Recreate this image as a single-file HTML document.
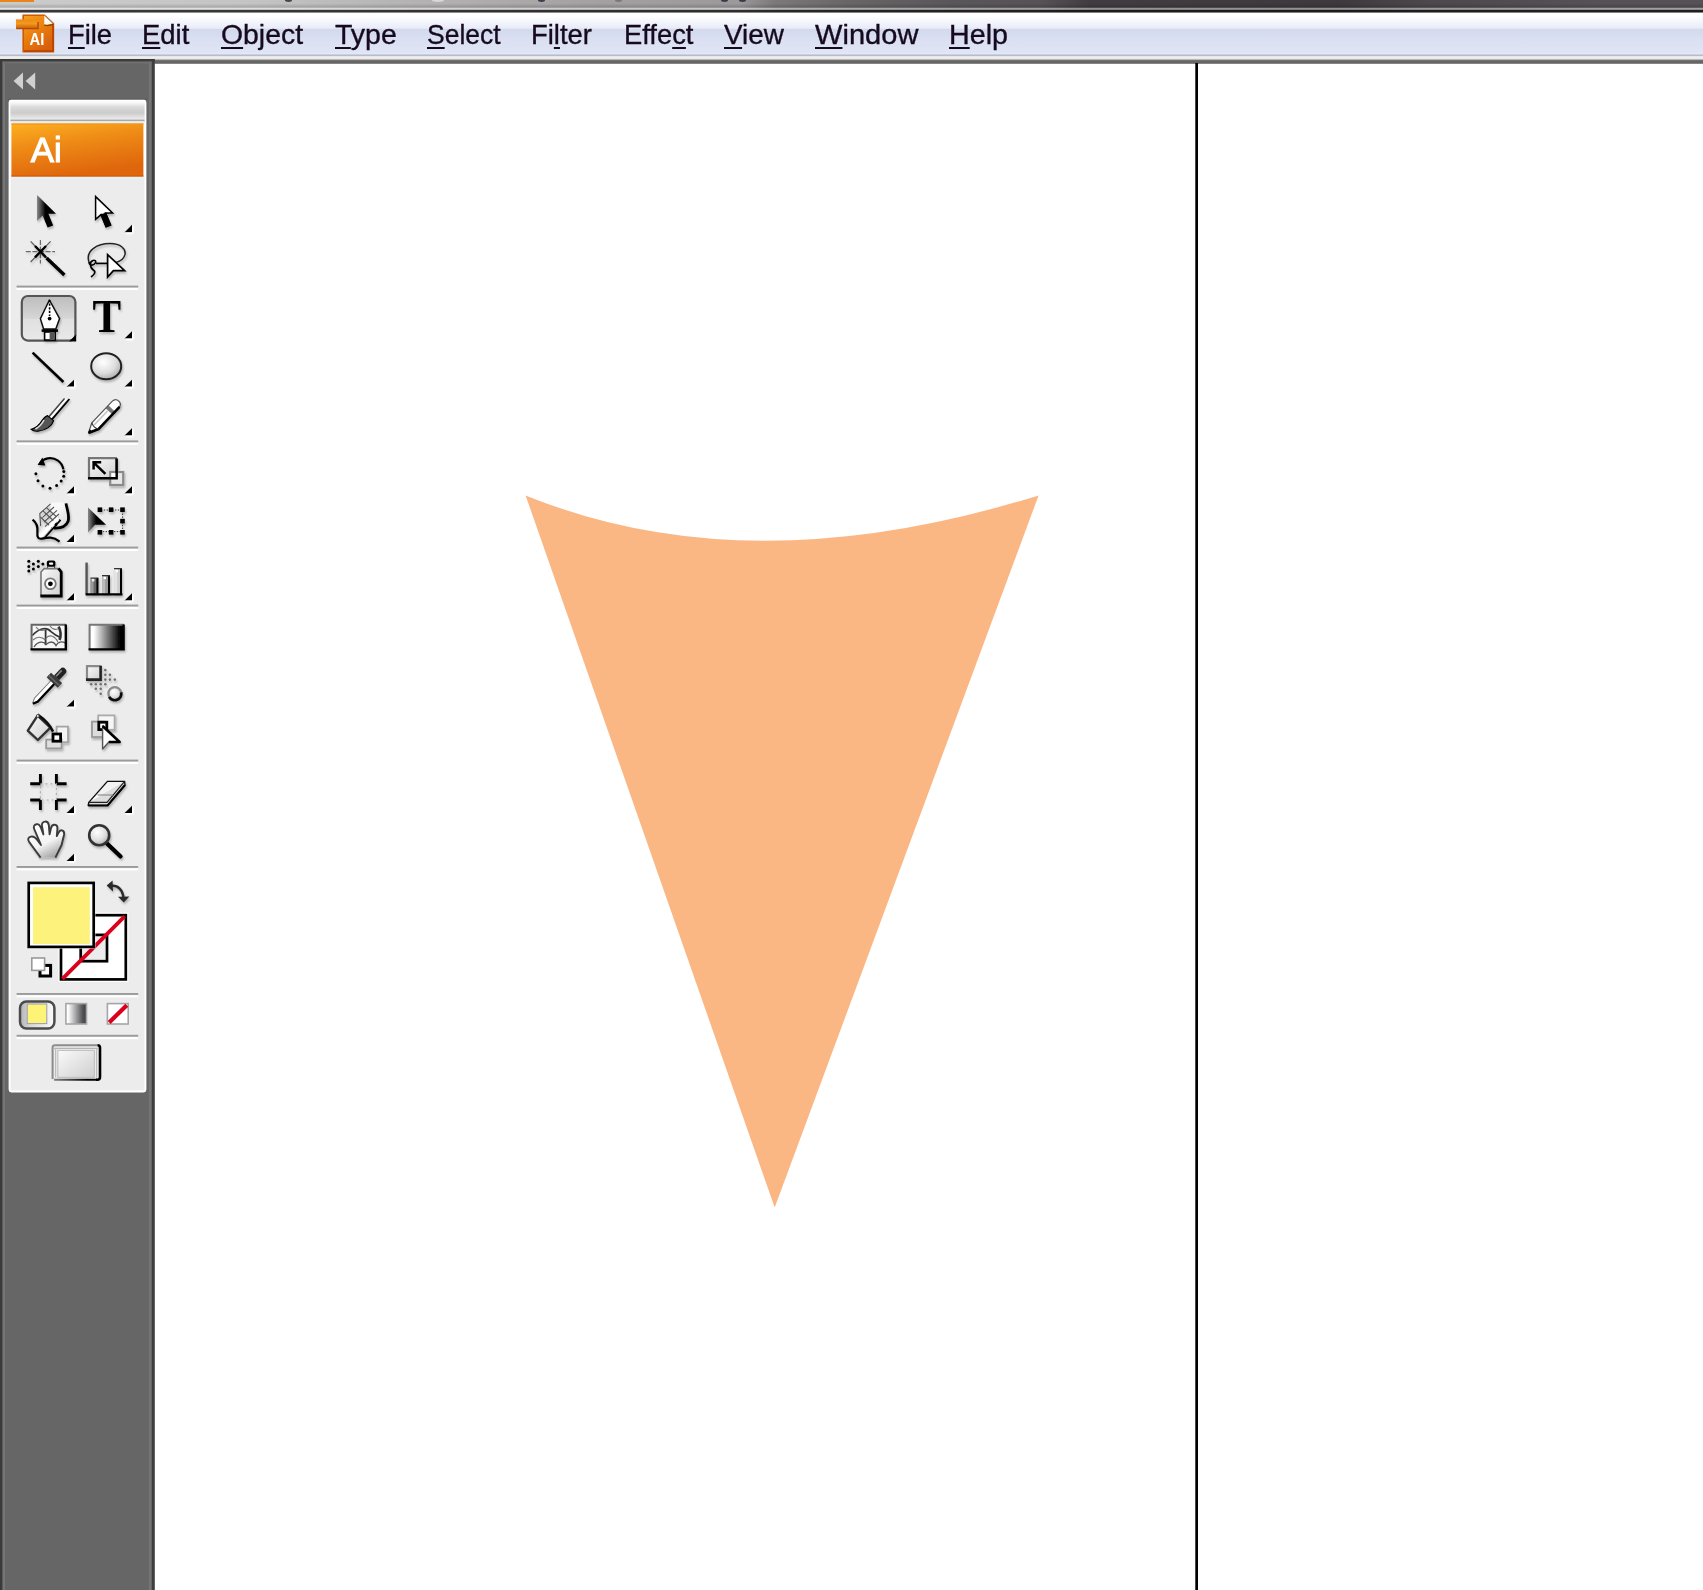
<!DOCTYPE html>
<html lang="en">
<head>
<meta charset="utf-8">
<title>Adobe Illustrator</title>
<style>
html,body{margin:0;padding:0;}
body{width:1703px;height:1590px;position:relative;overflow:hidden;background:#fff;font-family:"Liberation Sans",sans-serif;}
.abs{position:absolute;}
#title{left:0;top:0;width:1703px;height:13px;background:linear-gradient(180deg,rgba(0,0,0,0) 0,rgba(0,0,0,0) 3.5px,rgba(0,0,0,.13) 6.6px,rgba(0,0,0,.13) 7.3px,rgba(255,255,255,.45) 8.1px,rgba(255,255,255,.45) 9.3px,rgba(20,18,20,.8) 10.4px,rgba(20,18,20,.8) 12.1px,rgba(255,255,255,1) 13px),linear-gradient(90deg,#cbcbcb 0px,#c4c4c4 250px,#b0aeae 460px,#a3a0a1 600px,#9c999a 740px,#7c797b 775px,#686567 850px,#5a575a 950px,#565256 1040px,#403c40 1090px,#3d393d 1340px,#4c484c 1430px,#555156 1600px,#555156 1703px);}
#title .rm{position:absolute;top:-1.6px;height:3.4px;width:7px;border-radius:50%;background:#1c1c30;opacity:.75;filter:blur(0.5px);}
#title .or{left:0;top:0;width:34px;height:1.6px;background:#e8861c;}
#menu{left:0;top:12.8px;width:1703px;height:41.2px;background:linear-gradient(180deg,#ffffff 0px,#ffffff 3px,#f3f5fb 9px,#e8ecf6 15.4px,#d3d9ee 15.8px,#dbe0f2 28px,#e0e5f5 39px,#e4e9f8 41px);}
#mline1{left:0;top:53.6px;width:1703px;height:2.8px;background:linear-gradient(180deg,#d6dbec 0,#b6bbd0 1.4px,#b9bed3 2.8px);}
#mline2{left:0;top:56.4px;width:1703px;height:3.2px;background:linear-gradient(180deg,#d9dbe2 0,#f0efed 0.8px,#f0efed 2.4px,#b9b9b8 3.2px);}
#mline3{left:0;top:59.6px;width:1703px;height:4.2px;background:linear-gradient(180deg,#7e7e7e 0,#666 0.9px,#666 3.2px,#c9c9c9 4.2px);}
.mi{position:absolute;top:17px;height:36px;line-height:36px;font-size:28px;color:#160a1e;white-space:nowrap;transform-origin:0 0;-webkit-text-stroke:0.35px #160a1e;filter:blur(0.35px);}
.mi u{text-decoration:underline;text-decoration-thickness:2.3px;text-underline-offset:3.2px;text-decoration-skip-ink:none;}
#dock{left:0;top:59px;width:154.5px;height:1531px;background:#666;}
#vline{left:1195px;top:63px;width:3.2px;height:1527px;background:linear-gradient(90deg,rgba(0,0,0,0) 0,#000 0.7px,#000 2.5px,rgba(0,0,0,0) 3.2px);}
</style>
</head>
<body>
<div id="title" class="abs"><div class="or abs"></div><div class="rm" style="left:285px"></div><div class="rm" style="left:537.5px"></div><div class="rm" style="left:721px"></div><div class="rm" style="left:739px"></div><div class="rm" style="left:615px;opacity:.3"></div><div class="rm" style="left:432px;background:#fff;opacity:.5;width:12px"></div></div>
<div id="menu" class="abs"></div>
<div id="mline1" class="abs"></div><div id="mline2" class="abs"></div><div id="mline3" class="abs"></div>
<div id="vline" class="abs"></div>
<!--AIICON--><svg class="abs" style="left:10px;top:12px" width="50" height="44" viewBox="10 12 50 44">
<defs><linearGradient id="aiG" x1="0" y1="0" x2="0.6" y2="1"><stop offset="0" stop-color="#f8a21e"/><stop offset="0.5" stop-color="#ea8011"/><stop offset="1" stop-color="#d85f08"/></linearGradient>
<linearGradient id="aiT" x1="0" y1="0" x2="0" y2="1"><stop offset="0" stop-color="#f08a12"/><stop offset="0.45" stop-color="#f29a20"/><stop offset="1" stop-color="#c9560a"/></linearGradient>
<filter id="aiB" filterUnits="userSpaceOnUse" x="10" y="12" width="50" height="44"><feGaussianBlur stdDeviation="0.6"/></filter>
<filter id="aiH" filterUnits="userSpaceOnUse" x="6" y="8" width="58" height="52"><feGaussianBlur stdDeviation="1.6"/></filter></defs>
<path d="M23 15 H45 L53.6 23.4 V52 H23 V29 H16 V19.4 H23 Z" fill="#d8ecff" opacity="0.9" filter="url(#aiH)"/>
<g filter="url(#aiB)">
<path d="M23.2 15.2 H44.4 L53.4 23.6 V51.8 H23.2 Z" fill="url(#aiG)"/>
<path d="M23.2 15.2 H44.4 L53.4 23.6 V51.8 H23.2 Z" fill="none" stroke="#cf5a06" stroke-width="1.6"/>
<path d="M24 51 H53 V24" fill="none" stroke="#b84204" stroke-width="1.6"/>
<path d="M44.4 15.4 L53 23.6 C50 24.6 46.4 25 44.2 24.6 Z" fill="#fffaf2"/>
<path d="M44.2 25.2 C47 26 50.4 25.4 53.2 24" fill="none" stroke="#7a3a00" stroke-width="1.4" opacity="0.8"/>
<path d="M44.6 15.6 L53.2 23.8" stroke="#a89880" stroke-width="1"/>
<rect x="16" y="19.4" width="22.2" height="9.4" fill="url(#aiT)"/>
<path d="M16.4 28.6 H38 V22" fill="none" stroke="#b44a06" stroke-width="1.4"/>
<text x="29.6" y="45.2" font-family="'Liberation Sans',sans-serif" font-weight="bold" font-size="16.4" fill="#fff" textLength="14.8" lengthAdjust="spacingAndGlyphs">AI</text>
</g>
</svg><!--/AIICON-->
<!--MENUITEMS--><div class="mi" style="left:68.23px;transform:scaleX(0.9763)"><u>F</u>ile</div>
<div class="mi" style="left:142.23px;transform:scaleX(0.9795)"><u>E</u>dit</div>
<div class="mi" style="left:221.48px;transform:scaleX(1.0134)"><u>O</u>bject</div>
<div class="mi" style="left:334.68px;transform:scaleX(1.0186)"><u>T</u>ype</div>
<div class="mi" style="left:426.77px;transform:scaleX(0.9457)"><u>S</u>elect</div>
<div class="mi" style="left:531.33px;transform:scaleX(0.9796)">Fi<u>l</u>ter</div>
<div class="mi" style="left:624.33px;transform:scaleX(0.9770)">Effe<u>c</u>t</div>
<div class="mi" style="left:724.11px;transform:scaleX(0.9951)"><u>V</u>iew</div>
<div class="mi" style="left:814.95px;transform:scaleX(1.0379)"><u>W</u>indow</div>
<div class="mi" style="left:949.17px;transform:scaleX(1.0234)"><u>H</u>elp</div><!--/MENUITEMS-->
<svg class="abs" style="left:500px;top:470px" width="600" height="760" viewBox="500 470 600 760"><path d="M525.6 495.4 Q748 586 1038.6 495.4 L774.7 1207.5 Z" fill="#fbb783"/></svg>
<!--TOOLBOX--><svg class="abs" style="left:0;top:56px" width="160" height="1534" viewBox="0 56 160 1534">
<defs>
<linearGradient id="gGrip" x1="0" y1="0" x2="0" y2="1"><stop offset="0" stop-color="#ffffff"/><stop offset="0.12" stop-color="#f4f4f4"/><stop offset="0.3" stop-color="#dcdcdc"/><stop offset="0.62" stop-color="#cbcbcb"/><stop offset="0.85" stop-color="#e2e2e2"/><stop offset="1" stop-color="#ededed"/></linearGradient>
<linearGradient id="gOr" x1="0" y1="0" x2="0.35" y2="1"><stop offset="0" stop-color="#fdb022"/><stop offset="0.45" stop-color="#ee8a16"/><stop offset="1" stop-color="#df660c"/></linearGradient>
<linearGradient id="gSel" x1="0" y1="0" x2="0" y2="1"><stop offset="0" stop-color="#bdbdbd"/><stop offset="0.5" stop-color="#d6d6d6"/><stop offset="0.52" stop-color="#e0e0e0"/><stop offset="1" stop-color="#e9e9e9"/></linearGradient>
<linearGradient id="gBW" x1="0" y1="0" x2="1" y2="0"><stop offset="0.12" stop-color="#ffffff"/><stop offset="0.9" stop-color="#000000"/></linearGradient>
<linearGradient id="gArrow" x1="0" y1="0" x2="1" y2="0"><stop offset="0" stop-color="#8a8a8a"/><stop offset="0.45" stop-color="#000"/></linearGradient>
<radialGradient id="gBall" cx="0.4" cy="0.35" r="0.7"><stop offset="0" stop-color="#ffffff"/><stop offset="0.6" stop-color="#dedede"/><stop offset="1" stop-color="#a8a8a8"/></radialGradient>
<linearGradient id="gBtn" x1="0" y1="0" x2="1" y2="1"><stop offset="0" stop-color="#fafafa"/><stop offset="1" stop-color="#cfcfcf"/></linearGradient>
<linearGradient id="gHand" x1="0.3" y1="0" x2="0.8" y2="1"><stop offset="0" stop-color="#fff"/><stop offset="0.55" stop-color="#f4f4f4"/><stop offset="1" stop-color="#9a9a9a"/></linearGradient>
<linearGradient id="gColBtn" x1="0" y1="0" x2="1" y2="0"><stop offset="0" stop-color="#b4b4b4"/><stop offset="0.3" stop-color="#d8d8d8"/><stop offset="1" stop-color="#fafafa"/></linearGradient>
<linearGradient id="gGrBtn" x1="0" y1="0" x2="1" y2="0"><stop offset="0.1" stop-color="#ffffff"/><stop offset="0.8" stop-color="#55565a"/><stop offset="1" stop-color="#3c3c40"/></linearGradient>
<linearGradient id="gScr" gradientUnits="userSpaceOnUse" x1="52" y1="0" x2="100" y2="0"><stop offset="0" stop-color="#8a8a8a"/><stop offset="0.75" stop-color="#000"/></linearGradient>
<linearGradient id="gWarp" x1="0" y1="0" x2="1" y2="1"><stop offset="0" stop-color="#fff"/><stop offset="0.45" stop-color="#f6f6f6"/><stop offset="1" stop-color="#c4c4c4"/></linearGradient>
<filter id="soft" filterUnits="userSpaceOnUse" x="0" y="56" width="160" height="1100"><feGaussianBlur in="SourceAlpha" stdDeviation="1.3" result="sb"/><feOffset in="sb" dx="0.8" dy="2" result="so"/><feComponentTransfer in="so" result="sh"><feFuncA type="linear" slope="0.26"/></feComponentTransfer><feGaussianBlur in="SourceGraphic" stdDeviation="0.5" result="g"/><feMerge><feMergeNode in="sh"/><feMergeNode in="g"/></feMerge></filter>
<filter id="blur" filterUnits="userSpaceOnUse" x="0" y="56" width="160" height="1100"><feGaussianBlur stdDeviation="0.5"/></filter>
<filter id="tri" filterUnits="userSpaceOnUse" x="0" y="56" width="160" height="1100"><feGaussianBlur in="SourceAlpha" stdDeviation="0.9" result="sb"/><feOffset in="sb" dx="0.6" dy="1" result="so"/><feFlood flood-color="#fff" result="w"/><feComposite in="w" in2="so" operator="in" result="ws"/><feComponentTransfer in="ws" result="ws2"><feFuncA type="linear" slope="2.2"/></feComponentTransfer><feGaussianBlur in="SourceGraphic" stdDeviation="0.45" result="g"/><feMerge><feMergeNode in="ws2"/><feMergeNode in="g"/></feMerge></filter>
</defs>
<!-- dock frame -->
<rect x="0" y="59" width="154.6" height="1531" fill="#666"/>
<rect x="0" y="59" width="2.6" height="1531" fill="#3a3a3a"/>
<rect x="2.6" y="61" width="2.4" height="1529" fill="#757575"/>
<rect x="148.8" y="61" width="3" height="1529" fill="#747474"/>
<rect x="151.8" y="59" width="2.8" height="1531" fill="#3e3e3e"/>
<rect x="0" y="59" width="154.6" height="2.6" fill="#3c3c3c"/>
<rect x="2.6" y="61.6" width="149" height="1.8" fill="#707070"/>
<!-- collapse arrows -->
<g fill="#d0d0d0" filter="url(#blur)"><path d="M13.6 81 L23 72.4 L23 89.4 Z"/><path d="M25.6 81 L35.2 72.4 L35.2 89.4 Z"/></g>
<!-- panel -->
<path d="M8.6 1089 L8.6 103 Q8.6 99.6 12 99.6 L143 99.6 Q146.4 99.6 146.4 103 L146.4 1089 Q146.4 1092.6 143 1092.6 L12 1092.6 Q8.6 1092.6 8.6 1089 Z" fill="#ffffff"/>
<rect x="8" y="98.6" width="139" height="1.2" fill="#5a5a5a" opacity="0.6"/>
<rect x="10.6" y="178" width="133.8" height="912.4" fill="#ececec"/>
<rect x="10.4" y="101" width="134.2" height="19" fill="url(#gGrip)"/>
<rect x="10.4" y="119.6" width="134.2" height="1.8" fill="#a9a9a9"/>
<rect x="10.4" y="121.4" width="134.2" height="2.2" fill="#e9eef7"/>
<rect x="11.4" y="123.4" width="132" height="53.4" fill="url(#gOr)"/>
<rect x="11.4" y="123.4" width="132" height="1.6" fill="#f59a12" opacity="0.8"/>
<rect x="11.4" y="175.2" width="132" height="1.6" fill="#d85a04" opacity="0.8"/>
<rect x="10.4" y="176.8" width="134.2" height="2.4" fill="#e8f0f8"/>
<text x="30.8" y="162.4" font-family="'Liberation Sans',sans-serif" font-size="35.5" fill="#fff" stroke="#fff" stroke-width="1.1" textLength="31" lengthAdjust="spacingAndGlyphs" filter="url(#blur)">Ai</text>
<!-- separators -->
<g id="seps">
<g fill="#9b9b9b"><rect x="16.6" y="285.6" width="121.6" height="1.9"/><rect x="16.6" y="440.4" width="121.6" height="1.9"/><rect x="16.6" y="546.6" width="121.6" height="1.9"/><rect x="16.6" y="604.6" width="121.6" height="1.9"/><rect x="16.6" y="759.6" width="121.6" height="1.9"/><rect x="16.6" y="866" width="121.6" height="1.9"/><rect x="16.6" y="993" width="121.6" height="1.9"/><rect x="16.6" y="1034.8" width="121.6" height="1.9"/></g>
<g fill="#ffffff"><rect x="16.6" y="288" width="121.6" height="2"/><rect x="16.6" y="442.8" width="121.6" height="2"/><rect x="16.6" y="549" width="121.6" height="2"/><rect x="16.6" y="607" width="121.6" height="2"/><rect x="16.6" y="762" width="121.6" height="2"/><rect x="16.6" y="868.4" width="121.6" height="2"/><rect x="16.6" y="995.4" width="121.6" height="2"/><rect x="16.6" y="1037.2" width="121.6" height="2"/></g>
</g>
<!-- flyout triangles -->
<g fill="#000" filter="url(#tri)">
<path d="M132 224.6v7.6h-7.6z"/>
<path d="M132 331v7.4h-7.6z"/>
<path d="M74 379.4v7.4h-7.6z"/><path d="M132 379.4v7.4h-7.6z"/>
<path d="M132 428v7.4h-7.6z"/>
<path d="M74 486v7.4h-7.6z"/><path d="M132 486v7.4h-7.6z"/>
<path d="M74 534.6v7.4h-7.6z"/>
<path d="M74 593v7.4h-7.6z"/><path d="M132 593v7.4h-7.6z"/>
<path d="M74 699.4v7.4h-7.6z"/>
<path d="M74 805.6v7.4h-7.6z"/><path d="M132 805.6v7.4h-7.6z"/>
<path d="M74 853.6v7.4h-7.6z"/>
</g>
<!-- row1: selection / direct selection -->
<g filter="url(#soft)">
<path d="M37 195 L37 221 L42.6 215.6 L47.6 227.6 L53.2 225.4 L48.4 213.8 L56 213.8 Z" fill="url(#gArrow)"/>
<path d="M95.6 196.6 L95.6 219.4 L101 214.6 L106 226.8 L110.6 225 L105.6 213 L112.6 213 Z" fill="#fff" stroke="#000" stroke-width="1.5" stroke-linejoin="miter"/>
<path d="M100.6 214.4 L105.8 227.4 L111.4 225.2 L106 212.6 Z" fill="#000"/>
</g>
<!-- row2: magic wand -->
<g filter="url(#soft)" stroke="#000" fill="none">
<path d="M25.8 251.6H55M40.4 240V263.6" stroke-width="1.2" opacity="0.55" stroke-dasharray="5 1.6"/>
<path d="M30.6 241.4L50.6 262M50.6 241.4L30.6 262" stroke-width="1.3" opacity="0.6"/>
<path d="M35 246L46 257.4M46 246L35 257.4" stroke-width="2.4"/>
<path d="M46.6 258L64.4 275" stroke-width="3.4"/>
<path d="M49.6 257.6L56 263.8" stroke="#fff" stroke-width="1" stroke-dasharray="1.6 1.6"/>
</g>
<!-- row2: lasso -->
<g filter="url(#soft)" fill="none" stroke="#000">
<path d="M89 262C85 250 98 243.6 110 243.6C121 243.6 126 249 125 254.4C124 259 120 261.4 116 262.4" stroke-width="1.5" stroke="#222"/>
<path d="M89 262C89 265 91 266 94 264.4C97 262.4 96 259.6 93 260.4C89 261.6 90 268 93.4 270C96 271.6 95 274 91 277" stroke-width="1.6"/>
<path d="M96 263.4H108" stroke-width="1.7"/>
<path d="M107.6 254.6 L107.6 277 L113.4 270.6 L124.6 270.6 Z" fill="#fff" stroke-width="1.7"/>
</g>
<!-- row3: pen (selected) -->
<rect x="21.8" y="296" width="53.6" height="44.6" rx="6" ry="6" fill="url(#gSel)" stroke="#555" stroke-width="2.2"/>
<g filter="url(#soft)">
<path d="M49.4 300 L40.4 318.6 L43.6 329 L55.8 329 L59.6 318.6 Z" fill="#fff" stroke="#111" stroke-width="1.5" stroke-linejoin="round"/>
<path d="M49.6 300V316" stroke="#000" stroke-width="1.6" stroke-dasharray="2.2 1.4"/>
<circle cx="49.6" cy="318.6" r="1.9" fill="#000"/>
<path d="M41.6 330.6H58" stroke="#000" stroke-width="2.6"/>
<rect x="44.6" y="332" width="10.6" height="8" fill="#fff" stroke="#000" stroke-width="1.6"/>
<rect x="49.6" y="332" width="5" height="8" fill="#555"/>
</g>
<path d="M76.2 334.6v7h-7z" fill="#000" filter="url(#blur)"/>
<!-- row3: type -->
<text x="92.6" y="332.2" font-family="'Liberation Serif',serif" font-weight="bold" font-size="45.4" fill="#000" textLength="28.6" lengthAdjust="spacingAndGlyphs" filter="url(#soft)">T</text>
<!-- row4: line / ellipse -->
<g filter="url(#soft)">
<path d="M32.6 352.6L63.4 382" stroke="#000" stroke-width="2.6"/>
<ellipse cx="106.2" cy="366.2" rx="15" ry="13" fill="url(#gBall)" stroke="#222" stroke-width="2"/>
</g>
<!-- row5: brush -->
<g filter="url(#soft)">
<path d="M69.4 399 L52 419.4" stroke="#000" stroke-width="1.8"/>
<path d="M64.6 398.6 L48.6 417" stroke="#444" stroke-width="1.6"/>
<path d="M66.6 398.8 L50.4 418" stroke="#fff" stroke-width="1.6"/>
<path d="M47.4 415.6 L53.6 420.6 C52 426 46 430.4 38 431.2 C35 431.4 32.4 430.6 31.2 429.4 C36 428 40 424 42 420.6 C43.6 418 45.4 416.4 47.4 415.6 Z" fill="#555" stroke="#000" stroke-width="1.2"/>
<path d="M44 420C42 424 39 427 35.4 429" stroke="#ddd" stroke-width="1.6" fill="none"/>
</g>
<!-- row5: pencil -->
<g filter="url(#soft)">
<g transform="translate(88.4,433) rotate(43.6) scale(1,1.09)">
<path d="M0 0 L-4.6 -9 L-4.6 -36 Q-4.6 -40.4 0 -40.4 Q4.6 -40.4 4.6 -36 L4.6 -9 Z" fill="#fff"/>
<path d="M-4.6 -31 H4.6 V-27.4 H-4.6 Z" fill="#777"/>
<path d="M-1.4 -27 V-9" stroke="#c4c4c4" stroke-width="1.6"/>
<path d="M0 0 L-4.6 -9 L-4.6 -36 Q-4.6 -40.4 0 -40.4 Q4.6 -40.4 4.6 -36" fill="none" stroke="#555" stroke-width="1.2"/>
<path d="M4.6 -37 L4.6 -9 L0 0" fill="none" stroke="#000" stroke-width="2.6"/>
<path d="M-4.6 -9 Q0 -6.6 4.6 -9" fill="none" stroke="#333" stroke-width="1"/>
<path d="M0 0 L-1.6 -3.4 L1.8 -3.4 Z" fill="#000"/>
</g>
</g>

<!-- row6: rotate -->
<g filter="url(#soft)">
<path d="M39.4 464.4 C43 457.4 52 456.4 58 460.6 C61 462.8 62.8 466 63.4 469.4" fill="none" stroke="#000" stroke-width="2.2"/>
<path d="M37.6 465 L42.4 457.6 L45.4 465.4 Z" fill="#000"/>
<g fill="#000"><circle cx="63.8" cy="471.4" r="1.5"/><circle cx="63.7" cy="476.3" r="1.5"/><circle cx="61.2" cy="480.9" r="1.5"/><circle cx="56.6" cy="485.4" r="1.5"/><circle cx="50" cy="488.2" r="1.5"/><circle cx="42.9" cy="486" r="1.5"/><circle cx="38" cy="480.8" r="1.5"/><circle cx="35.9" cy="473.8" r="1.5"/></g>
</g>
<!-- row6: scale -->
<g filter="url(#soft)">
<rect x="89" y="458.2" width="27.6" height="19.8" fill="url(#gBtn)"/>
<rect x="110.2" y="472" width="13" height="13" fill="#ececec" fill-opacity="0.75" stroke="#8a8a8a" stroke-width="2.2"/>
<path d="M89 479 V458.2 H117" fill="none" stroke="#777" stroke-width="2.2"/>
<path d="M88 478.2 H116.6 V458.4" fill="none" stroke="#000" stroke-width="2.6"/>
<rect x="111.4" y="473.2" width="3.9" height="3.7" fill="#fff"/>
<path d="M105.4 473.8 L94 462.8 M93.6 469.4 V462.2 H101.2" fill="none" stroke="#000" stroke-width="2.5"/>
</g>
<!-- row7: warp -->
<g filter="url(#soft)">
<path d="M50.4 503.6 C56 502 62 502 66 503.4 L68.4 517 C68 523 64 527.6 58 528 L50 528 L40 540 L37 536 L52 518 Z" fill="url(#gWarp)"/>
<g stroke="#555" stroke-width="1.1" fill="none"><path d="M50.6 503.8 L39.8 513.6 L40.6 526"/><path d="M54 507 L42.4 517.6 M57 510.4 L44 522 M59 514 L45 526.6"/><path d="M43 510.8 L57 524 M46.4 507.6 L60 520 M40.4 517 L52 528"/></g>
<path d="M66 503.4 C67 510 70 516 68 521.6 C66 526.6 61 528.4 54 528" fill="none" stroke="#000" stroke-width="2.8"/>
<path d="M58.6 518 C55 519 54 523 56.6 526" fill="none" stroke="#000" stroke-width="2.4"/>
<path d="M40.6 536.6 L58.6 517.4" stroke="#fff" stroke-width="3.4"/>
<path d="M43.6 539 L60.6 520" stroke="#000" stroke-width="1.8"/>
<path d="M32.6 519.6 C37 523 38 527 37.4 532 C37 537 38 539.4 42 538.6 C48 537.4 53 536.4 59.6 541.6" fill="none" stroke="#000" stroke-width="2.2"/>
</g>
<!-- row7: free transform -->
<g filter="url(#soft)">
<path d="M101 510 H122.6 V531.6 H101" fill="none" stroke="#333" stroke-width="1" stroke-dasharray="1.4 1.4"/>
<g fill="#000"><rect x="97.6" y="507.4" width="4.6" height="4.6"/><rect x="108.8" y="507.4" width="4.6" height="4.6"/><rect x="120.2" y="507.4" width="4.6" height="4.6"/><rect x="120.2" y="518.8" width="4.6" height="4.6"/><rect x="120.2" y="530" width="4.6" height="4.6"/><rect x="108.8" y="530" width="4.6" height="4.6"/><rect x="97.6" y="530" width="4.6" height="4.6"/></g>
<path d="M88 507.6 L88 532.4 L95 524.8 L106 524.8 Z" fill="url(#gArrow)"/>
</g>
<!-- row8: symbol sprayer -->
<g filter="url(#soft)">
<g fill="#000"><circle cx="28.8" cy="561.2" r="1.5"/><circle cx="38.3" cy="561.2" r="1.5"/><circle cx="33.4" cy="564" r="1.5"/><circle cx="42.9" cy="564" r="1.5"/><circle cx="28.8" cy="566.4" r="1.5"/><circle cx="38.3" cy="566.4" r="1.5"/><circle cx="33.4" cy="568.9" r="1.5"/><circle cx="28.8" cy="571" r="1.5"/></g>
<rect x="46.8" y="560.6" width="8.6" height="6.4" rx="2" fill="#000"/>
<rect x="49" y="562.4" width="4.2" height="2.4" rx="1" fill="#fff"/>
<rect x="47.6" y="566.6" width="7" height="3" fill="#fff" stroke="#333" stroke-width="1"/>
<path d="M44 568.6 H58.6 L61.4 572 V596 H41 V572 Z" fill="url(#gBtn)"/>
<path d="M41 596.6 V572 L44 568.6 H58.6" fill="none" stroke="#777" stroke-width="1.6"/>
<path d="M58.4 568.4 L61.2 572 V596 H40.4" fill="none" stroke="#000" stroke-width="2.8"/>
<circle cx="50.4" cy="583.8" r="5.4" fill="#fff" stroke="#777" stroke-width="1.8"/>
<circle cx="50.4" cy="583.8" r="2.4" fill="#000"/>
</g>
<!-- row8: graph -->
<g filter="url(#soft)">
<rect x="90.6" y="578" width="7.6" height="16" fill="#666"/><rect x="90.6" y="578" width="3" height="16" fill="#999"/><rect x="96.4" y="578" width="2" height="16" fill="#000"/><rect x="92" y="579" width="2.4" height="2.4" fill="#eee"/>
<rect x="102.2" y="575.6" width="7.6" height="18.6" fill="#999"/><rect x="102.2" y="575.6" width="3" height="18.6" fill="#bbb"/><rect x="108" y="575.6" width="2" height="18.6" fill="#000"/><rect x="103.6" y="576.6" width="2.4" height="2.4" fill="#fff"/>
<rect x="114.2" y="568.6" width="7.6" height="25.6" fill="#ccc"/><rect x="114.2" y="568.6" width="3" height="25.6" fill="#e4e4e4"/><rect x="120" y="568.6" width="2" height="25.6" fill="#000"/><rect x="115.6" y="569.8" width="2.4" height="2.4" fill="#fff"/>
<path d="M90.4 578 H98.4 M102 575.6 H110 M114 568.6 H122" stroke="#333" stroke-width="1.2"/>
<path d="M86.6 562.6 V594" stroke="#555" stroke-width="2.4"/>
<path d="M85.6 594.4 H122.4" stroke="#000" stroke-width="2.3"/>
</g>
<!-- row9: mesh -->
<g filter="url(#soft)">
<rect x="31.6" y="624.8" width="34.4" height="24.6" fill="#f6f6f6"/>
<g fill="none" stroke="#333"><path d="M32.4 635.6 C38 629 46 626 51 631.6 C55 635 59 637 60.4 637.6" stroke-width="1.6"/><path d="M45.6 630 V645" stroke-width="1.8"/><path d="M58.6 626.6 C61 631 61 636 59.6 640" stroke-width="2.6"/><path d="M34 647 C38 641 44 641 46 644.6 C50 641 54 641 56 645.6 C58 642 62 641 65 643" stroke-width="1.3" stroke="#555"/><path d="M33 640 C37 636 42 637 45.6 640 M46 638 C50 634 55 636 58 642 M36 627 C38 630 41 631 45 630 M50 626 C52 629 55 630 58 629" stroke-width="1.1" stroke="#777"/></g>
<path d="M31.6 650 V624.8 H66" fill="none" stroke="#666" stroke-width="2"/>
<path d="M30.6 649.4 H65.8 V624.6" fill="none" stroke="#000" stroke-width="2.4"/>
</g>
<!-- row9: gradient -->
<g filter="url(#soft)">
<rect x="89.6" y="624.8" width="34" height="24.6" fill="url(#gBW)"/>
<path d="M89.6 650 V624.8 H124" fill="none" stroke="#777" stroke-width="2"/>
<path d="M88.6 649.4 H123.6 V624.6" fill="none" stroke="#000" stroke-width="2.4"/>
</g>

<!-- row10: eyedropper (local axis along x from tip) -->
<g filter="url(#soft)">
<g transform="translate(32.6,703.4) rotate(-46.8)">
<path d="M0 0 L5 -2.2 L30 -2.2 L30 2.4 L5 2.4 Z" fill="#fff"/>
<path d="M0 0 L5 -2.2 L30 -2.2" fill="none" stroke="#777" stroke-width="1"/>
<path d="M0 0.4 L5 2.5 L30 2.5" fill="none" stroke="#000" stroke-width="2.2"/>
<rect x="28.6" y="-7.6" width="6.4" height="15.2" fill="#3a3a3a"/>
<rect x="30.6" y="-7.6" width="1.6" height="15.2" fill="#666"/>
<path d="M35 -3.4 H44 Q47.6 -3.4 47.6 0 Q47.6 3.4 44 3.4 H35 Z" fill="#222"/>
<path d="M36 -1.4 H44" stroke="#888" stroke-width="1.6"/>
</g>
</g>
<!-- row10: blend -->
<g filter="url(#soft)">
<rect x="87" y="666.2" width="13.6" height="13.4" fill="url(#gBtn)"/>
<path d="M87 680.6 V666.2 H101.6" fill="none" stroke="#8a8a8a" stroke-width="2.2"/>
<path d="M86 679.6 H100.6 V666" fill="none" stroke="#222" stroke-width="2.6"/>
<g fill="#707070"><circle cx="105.3" cy="670.1" r="1.3"/><circle cx="105.3" cy="674.7" r="1.3"/><circle cx="109.9" cy="674.7" r="1.3"/><circle cx="105.3" cy="679.6" r="1.3"/><circle cx="109.9" cy="679.6" r="1.3"/><circle cx="114.8" cy="679.6" r="1.3"/><circle cx="91.2" cy="684.2" r="1.3"/><circle cx="95.8" cy="684.2" r="1.3"/><circle cx="100.7" cy="684.2" r="1.3"/><circle cx="105.3" cy="684.2" r="1.3"/><circle cx="95.8" cy="688.8" r="1.3"/><circle cx="100.7" cy="688.8" r="1.3"/><circle cx="100.7" cy="693.7" r="1.3"/></g>
<circle cx="114.8" cy="693.6" r="6.4" fill="url(#gBall)" stroke="#8a8a8a" stroke-width="2.2"/>
<path d="M121.1 692.4 A6.4 6.4 0 0 1 109.2 696.8" fill="none" stroke="#111" stroke-width="2.8"/>
</g>
<!-- row11: live paint bucket -->
<g filter="url(#soft)">
<rect x="56.6" y="726.6" width="11.4" height="15.6" fill="#f4f4f4" stroke="#a4a4a4" stroke-width="1.8"/>
<rect x="46.2" y="739.6" width="15.4" height="8.8" fill="#e0e0e0" stroke="#999" stroke-width="1.8"/>
<rect x="53" y="734" width="7.6" height="7.2" fill="#fff" stroke="#000" stroke-width="2.8"/>
<path d="M37.6 715.6 L50.4 727.6 L37.8 740 L27.8 730.6 Z" fill="url(#gBtn)" stroke="#333" stroke-width="2.4" stroke-linejoin="round"/>
<path d="M37.6 714.6 C44 719 50 725 53 731.6" fill="none" stroke="#111" stroke-width="2.6"/>
<circle cx="37.8" cy="716" r="1.4" fill="#fff" stroke="#333" stroke-width="0.8"/>
</g>
<!-- row11: live paint selection -->
<g filter="url(#soft)">
<rect x="98.2" y="715.4" width="16.4" height="14.4" fill="#f6f6f6" stroke="#aaa" stroke-width="1.8"/>
<rect x="92" y="721.6" width="12" height="15.4" fill="#dcdcdc" stroke="#999" stroke-width="1.8"/>
<rect x="98.8" y="722.2" width="8" height="7.4" fill="#fff" stroke="#000" stroke-width="2.8"/>
<path d="M102.6 726 L102.6 749 L108.8 742 L119.6 742 Z" fill="#fff" stroke="#555" stroke-width="1.4" stroke-linejoin="round"/>
<path d="M102.6 726 L119.6 742 L108.8 742" fill="none" stroke="#000" stroke-width="2.6" stroke-linejoin="round"/>
</g>
<!-- row12: crop area -->
<g filter="url(#soft)">
<path d="M40.4 774 V784 M56.4 774 V784 M40.4 800 V810 M56.4 800 V810 M30.2 783.8 H40.4 M56.4 783.8 H66.6 M30.2 800 H40.4 M56.4 800 H66.6" stroke="#000" stroke-width="2.9" fill="none"/>
<path d="M40.4 783.8 H56.4 V800 H40.4 Z" fill="none" stroke="#aaa" stroke-width="1.2" stroke-dasharray="2 3"/>
</g>
<!-- row12: eraser -->
<g filter="url(#soft)">
<path d="M107.4 781.4 L124.4 781.4 L107 802.4 L88.8 802.4 Z" fill="#f2f2f2"/>
<path d="M97.6 795 L113 795 L107 802.4 L88.8 802.4 Z" fill="#fff"/>
<path d="M124.4 781.4 L125 785 L107.6 805.6 L88 805.6 L88.8 802.4" fill="#ddd"/>
<path d="M107.4 781.4 L124.6 781.4 L125 785 L107.6 805.4 L88.2 805.4 L88.8 802.4 Z" fill="none" stroke="#111" stroke-width="1.4" stroke-linejoin="round"/>
<path d="M88.8 802.4 L107 802.4 L124.4 781.6" fill="none" stroke="#222" stroke-width="1.2"/><path d="M97.6 795 L113 795" fill="none" stroke="#888" stroke-width="1.1"/>
<path d="M88.2 805.4 L107.6 805.4 L125 785" fill="none" stroke="#000" stroke-width="2"/>
</g>
<!-- row13: hand -->
<g filter="url(#soft)">
<path d="M40.6 857.6 L29.2 842 C27 839 28.6 837 31 836.6 C34 836.2 36 838 38.4 841.4 L41 845 L34.2 829 C33 826 34.6 824.6 36.4 824.2 C38.4 823.8 39.6 825 40.6 827 L43.4 834.4 L42 826 C41.6 823 43 821.8 45 821.6 C47 821.4 48.4 822.6 48.8 825 L49.6 834.4 L51 828 C51.6 825.6 53 824.6 54.8 824.8 C56.8 825 57.6 826.6 57.4 829 L56.8 836 L58.6 832.6 C59.6 830.6 61.2 830 62.6 830.6 C64.2 831.4 64.4 833 64 835 L61.6 845 L55.4 857.6 Z" fill="url(#gHand)"/>
<path d="M40.6 857.6 L29.2 842 C27 839 28.6 837 31 836.6 C34 836.2 36 838 38.4 841.4 L41 845 L34.2 829 C33 826 34.6 824.6 36.4 824.2 C38.4 823.8 39.6 825 40.6 827 L43.4 834.4 L42 826 C41.6 823 43 821.8 45 821.6 C47 821.4 48.4 822.6 48.8 825 L49.6 834.4 L51 828 C51.6 825.6 53 824.6 54.8 824.8 C56.8 825 57.6 826.6 57.4 829 L56.8 836 L58.6 832.6 C59.6 830.6 61.2 830 62.6 830.6 C64.2 831.4 64.4 833 64 835 L61.6 845 L55.4 857.6" fill="none" stroke="#3a3a3a" stroke-width="1.9" stroke-linejoin="round"/>
</g>
<!-- row13: zoom -->
<g filter="url(#soft)">
<path d="M107 843.4 L120.6 856.4" stroke="#000" stroke-width="4.2" stroke-linecap="round"/>
<circle cx="99.2" cy="835.2" r="10" fill="url(#gBall)" stroke="#333" stroke-width="2.6"/>
</g>

<!-- stroke swatch (behind) -->
<g filter="url(#blur)">
<rect x="58.4" y="912.6" width="70" height="69.4" fill="#fff" opacity="0.9"/>
<rect x="61" y="915.2" width="64.8" height="64.2" fill="#fff" stroke="#000" stroke-width="2.7"/>
<rect x="80.7" y="934.9" width="26.3" height="26.3" fill="#ececec" stroke="#000" stroke-width="2.7"/>
<path d="M62.4 978.8 L124.6 916.4" stroke="#db001b" stroke-width="3.8"/>
<!-- fill swatch -->
<rect x="27" y="881.2" width="68.4" height="67.4" fill="#fff" opacity="0.95"/>
<rect x="28.7" y="882.9" width="65" height="64" fill="#fff" stroke="#000" stroke-width="2.7"/>
<rect x="33" y="887.2" width="56.8" height="56.8" fill="#fdf27b"/>
</g>
<!-- swap arrows -->
<g filter="url(#soft)">
<path d="M110.6 886 C118 884.6 123 890 123.6 898.6" fill="none" stroke="#2a2a2a" stroke-width="2.5"/>
<path d="M106.6 885.6 L112.6 880.6 L113 891.6 Z" fill="#2a2a2a"/>
<path d="M123.8 902.4 L118 896.8 L129.4 896.6 Z" fill="#2a2a2a"/>
</g>
<!-- default fill/stroke -->
<g filter="url(#blur)">
<rect x="40" y="965.4" width="10.6" height="10.6" fill="#fff" stroke="#000" stroke-width="3"/>
<rect x="31.8" y="958" width="12.8" height="12.4" fill="#fff" stroke="#9a9a9a" stroke-width="1.6"/>
</g>
<!-- color / gradient / none buttons -->
<g filter="url(#blur)">
<rect x="20" y="1001.6" width="34.4" height="26.8" rx="6.4" ry="6.4" fill="url(#gColBtn)" stroke="#4c4c4c" stroke-width="2.5"/>
<rect x="27.2" y="1004" width="19.6" height="19.6" fill="#fdf477" stroke="#9c9cb0" stroke-width="1"/>
<rect x="65.9" y="1003.6" width="20.6" height="20.4" fill="url(#gGrBtn)" stroke="#a6a6a6" stroke-width="1.6"/>
<rect x="107.4" y="1003.6" width="20.8" height="20.4" fill="#fff" stroke="#a6a6a6" stroke-width="1.6"/>
<path d="M109.2 1022.4 L126.8 1005.2" stroke="#db001b" stroke-width="4.2"/>
</g>
<!-- screen mode button -->
<g filter="url(#blur)">
<rect x="52.4" y="1045.2" width="48" height="34.6" rx="2.6" ry="2.6" fill="#ececec"/>
<rect x="57.8" y="1050.4" width="36.6" height="27" fill="url(#gBtn)" stroke="#c2c2c2" stroke-width="1.2"/>
<path d="M54 1048.4 H98" stroke="#b4b4b4" stroke-width="1.2"/>
<path d="M52.6 1079 V1047.6 Q52.6 1045.2 55 1045.2 H98" fill="none" stroke="#8c8c8c" stroke-width="2"/>
<path d="M54 1079.8 H97.4" fill="none" stroke="url(#gScr)" stroke-width="2"/><path d="M96 1079.8 H97.4 Q100 1079.8 100 1077 V1047.6 Q100 1045.4 97.6 1045.2" fill="none" stroke="#000" stroke-width="2.6"/>
<path d="M55.6 1048 V1077.4 M96.6 1048 V1077.4" stroke="#bcbcbc" stroke-width="1.2"/>
</g>


</svg>
<!--/TOOLBOX-->
</body>
</html>
